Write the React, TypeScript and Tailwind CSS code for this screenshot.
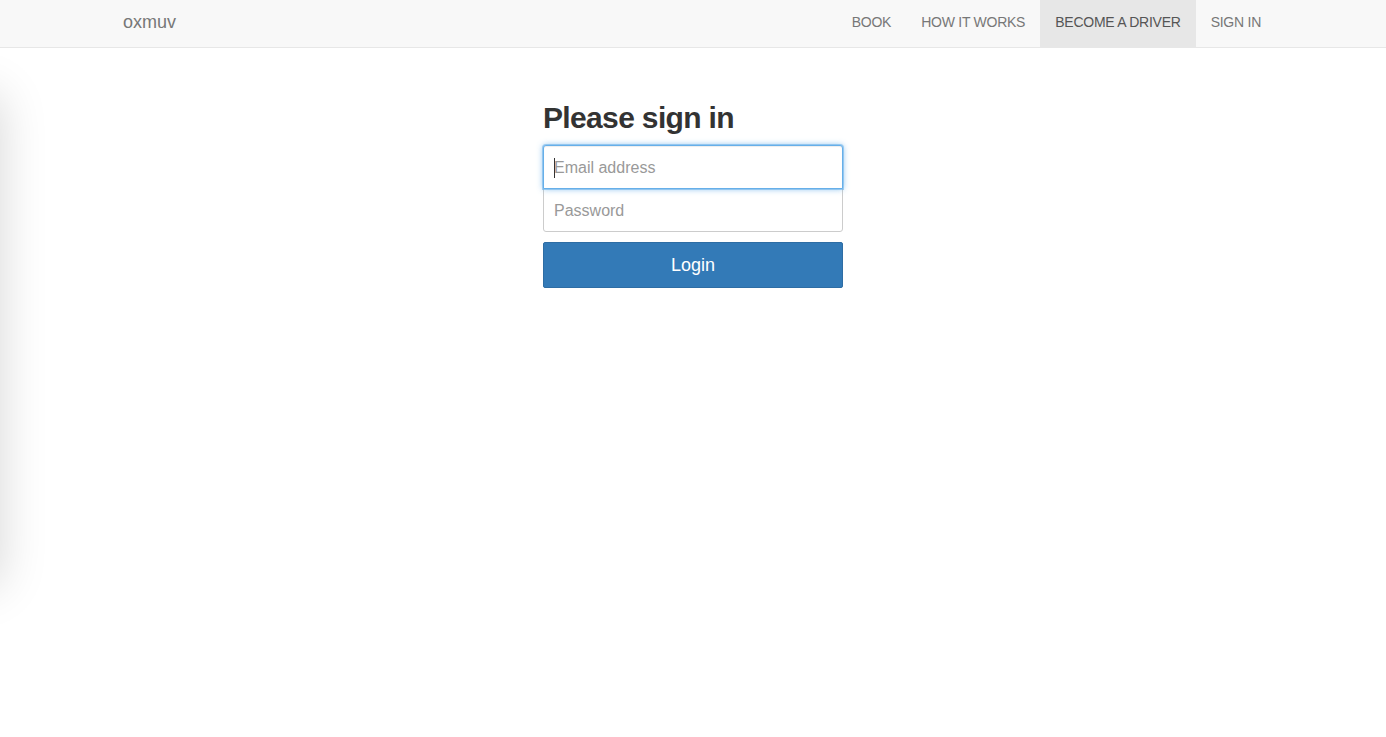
import React from 'react';

const navLinks = [
  { label: 'BOOK', active: false },
  { label: 'HOW IT WORKS', active: false },
  { label: 'BECOME A DRIVER', active: true },
  { label: 'SIGN IN', active: false },
];

export default function App() {
  return (
    <div
      className="relative min-h-[737px] overflow-hidden bg-white"
      style={{ fontFamily: '"Liberation Sans", Arial, sans-serif' }}
    >
      {/* Off-canvas drawer peeking shadow */}
      <div className="absolute left-[-320px] top-[95px] h-[490px] w-[320px] bg-white shadow-[0_0_45px_rgba(0,0,0,0.16)]" />

      {/* Navbar */}
      <nav className="h-[48px] border-b border-[#e7e7e7] bg-[#f8f8f8]">
        <div className="mx-auto flex h-[47px] w-[1170px] items-start justify-between px-[15px]">
          <a className="pt-[12px] text-[18px] leading-[20px] text-[#777]">oxmuv</a>
          <ul className="mr-[-13px] flex">
            {navLinks.map((link) => (
              <li key={link.label}>
                <a
                  className={`block h-[47px] px-[15px] pt-[12px] text-[14px] leading-[20px] tracking-[-0.25px] ${
                    link.active ? 'bg-[#e7e7e7] text-[#555]' : 'text-[#777]'
                  }`}
                >
                  {link.label}
                </a>
              </li>
            ))}
          </ul>
        </div>
      </nav>

      {/* Sign in form */}
      <div className="mx-auto w-[300px] pt-[53px]">
        <h2 className="mb-[11px] text-[30px] font-bold leading-[33px] tracking-[-0.65px] text-[#333]">
          Please sign in
        </h2>
        <div className="relative">
          <input
            type="email"
            placeholder="Email address"
            className="relative z-10 block h-[44px] w-full rounded-t-[3px] border border-[#66afe9] bg-white px-[10px] pt-px text-[16px] text-[#555] shadow-[inset_0_1px_1px_rgba(0,0,0,0.075),0_0_0_1px_rgba(102,175,233,0.55),0_0_6px_rgba(102,175,233,0.8)] outline-none placeholder:text-[#999]"
          />
          <span className="absolute left-[11px] top-[13px] z-20 h-[20px] w-px bg-[#333]" />
        </div>
        <input
          type="password"
          placeholder="Password"
          className="mt-[-1px] block h-[44px] w-full rounded-b-[3px] border border-[#ccc] bg-white px-[10px] pt-px text-[16px] text-[#555] outline-none placeholder:text-[#999]"
        />
        <button className="mt-[10px] block h-[46px] w-full rounded-[2px] border border-[#2e6da4] bg-[#337ab7] text-[18px] text-white">
          Login
        </button>
      </div>
    </div>
  );
}
